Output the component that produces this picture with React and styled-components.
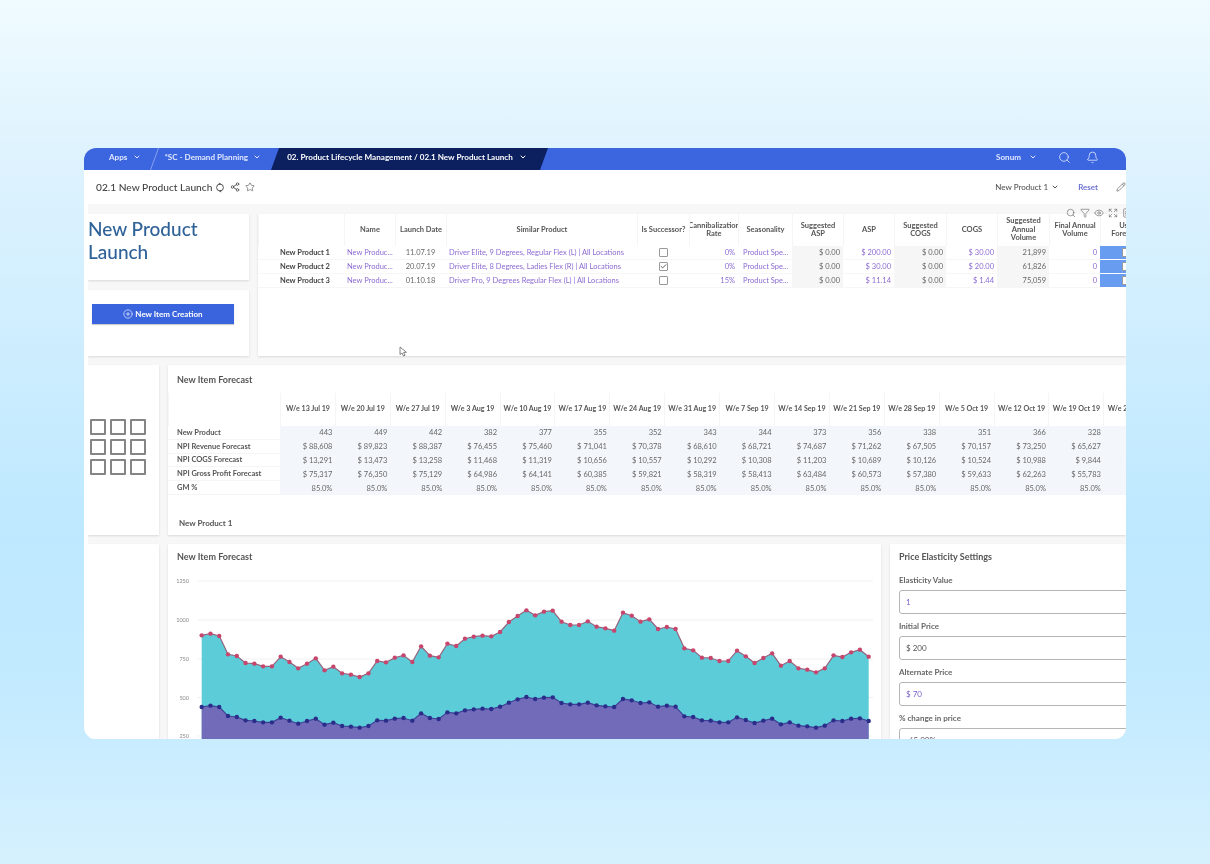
import React from 'react';
import styled, { createGlobalStyle } from 'styled-components';
import { ChevronDown, Search, Bell, Share2, Star, Pencil, Filter, Eye, Expand, FileText, CirclePlus, Check } from 'lucide-react';

const GlobalStyle = createGlobalStyle`
  html, body { margin: 0; padding: 0; }
  body {
    height: 864px;
    overflow: hidden;
    font-family: 'Lato', 'Open Sans', sans-serif;
    background: linear-gradient(180deg, #f0fbff 0%, #dff3fe 17%, #bde8ff 62%, #c3eaff 80%, #d6f1fe 100%);
  }
`;

const Page = styled.div`
  padding: 148px 84px 0;
`;

const Window = styled.div`
  width: 1042px;
  height: 591px;
  background: #fff;
  border-radius: 12px;
  overflow: hidden;
  filter: blur(0.45px);
`;

// --- top nav ---

const NavBar = styled.div`
  height: 22px;
  background: #3c66e0;
  display: flex;
  align-items: center;
  padding-left: 10px;
  color: #fff;
  font-size: 8.1px;
  font-weight: 700;
`;

const NavTab = styled.div`
  position: relative;
  height: 100%;
  box-sizing: border-box;
  display: flex;
  align-items: center;
  gap: ${p => p.$gap || 6}px;
  padding: 0 ${p => p.$right}px 4px ${p => p.$left}px;
  color: ${p => (p.$dark ? '#fff' : '#dfe7ff')};
  z-index: 0;

  &::before {
    content: '';
    position: absolute;
    inset: 0;
    z-index: -1;
    transform: skewX(-20deg);
    background: ${p => (p.$dark ? '#0c1f5e' : 'transparent')};
    border-right: ${p => (p.$line ? '1px solid #86a0ee' : 'none')};
  }
`;

const NavRight = styled.div`
  margin-left: auto;
  display: flex;
  align-items: center;
  padding: 0 27px 4px 0;
  color: #dfe7ff;
`;

const NavUser = styled.div`
  display: flex;
  align-items: center;
  gap: 8px;
  margin-right: 21px;
`;

const NavIcon = styled.span`
  display: flex;
  margin-left: ${p => p.$left || 0}px;
`;

// --- title bar ---

const TitleBar = styled.div`
  height: 34px;
  display: flex;
  align-items: center;
  padding: 0 0 0 12px;
`;

const PageName = styled.div`
  font-size: 10.2px;
  font-weight: 500;
  color: #444;
  margin-right: 3px;
`;

const TitleIcons = styled.div`
  display: flex;
  align-items: center;
  gap: 5px;
  color: #555;
`;

const TitleActions = styled.div`
  margin-left: auto;
  display: flex;
  align-items: center;
  color: #555;
`;

const PageSelect = styled.div`
  display: flex;
  align-items: center;
  gap: 3px;
  font-size: 8px;
  font-weight: 500;
  color: #555;
  margin-right: 19px;
`;

const ResetLink = styled.div`
  font-size: 8px;
  font-weight: 700;
  color: #6f74d2;
  margin-right: 18px;
`;

// --- canvas ---

const Canvas = styled.div`
  margin-left: 4px;
  height: 535px;
  background: #f7f7f7;
  padding-top: 10px;
  display: flex;
  flex-direction: column;
  gap: 9px;
  overflow: hidden;
`;

const Row = styled.div`
  display: flex;
  gap: 9px;
  height: ${p => p.$h}px;
  flex: none;
`;

const Card = styled.div`
  position: relative;
  background: #fff;
  box-shadow: 0 1px 2px rgba(0, 0, 0, 0.12);
  width: ${p => (p.$w ? `${p.$w}px` : 'auto')};
  flex: ${p => (p.$w ? 'none' : '1')};
  min-width: 0;
  overflow: ${p => (p.$clip ? 'hidden' : 'visible')};
`;

const SideStack = styled.div`
  width: 161px;
  flex: none;
  display: flex;
  flex-direction: column;
  gap: 10px;
`;

const SideCard = styled(Card)`
  flex: none;
  height: 66px;
  box-sizing: border-box;
  padding: ${p => p.$pad};
`;

const BigTitle = styled.h1`
  margin: 0;
  font-size: 19px;
  line-height: 23px;
  font-weight: 500;
  color: #2f6299;
`;

const BlueButton = styled.div`
  width: 142px;
  height: 20px;
  background: #3a64de;
  color: #fff;
  font-size: 8px;
  font-weight: 700;
  display: flex;
  align-items: center;
  justify-content: center;
  gap: 2px;
  box-shadow: 0 1px 1px rgba(0, 0, 0, 0.2);
`;

const TableIcons = styled.div`
  position: absolute;
  top: -6px;
  right: -6px;
  display: flex;
  align-items: center;
  gap: 4px;
  color: #666;
`;

const CursorMark = styled.svg`
  position: absolute;
  left: 141px;
  top: 132px;
`;

// --- settings table ---

const settingsColumns = '86px 51px 51px 191px 52px 49px 54px 51px 51px 52px 51px 52px 51px 50px';

const SettingsRow = styled.div`
  display: grid;
  grid-template-columns: ${settingsColumns};
  height: ${p => p.$h}px;
`;

const HeadCell = styled.div`
  display: flex;
  align-items: center;
  justify-content: center;
  text-align: center;
  box-sizing: border-box;
  padding: 0 ${p => p.$inset || 0}px;
  font-size: ${p => p.$size || 7.5}px;
  line-height: 8.5px;
  font-weight: 700;
  color: #555;
  border-left: 1px solid #f5f5f5;
  overflow: hidden;
  white-space: ${p => (p.$nowrap ? 'nowrap' : 'normal')};
`;

const Cell = styled.div`
  display: flex;
  align-items: center;
  justify-content: ${p => (p.$align === 'left' ? 'flex-start' : p.$align === 'center' ? 'center' : 'flex-end')};
  padding: ${p => (p.$align === 'center' ? '0' : `0 3px 0 ${p.$inset || 3}px`)};
  font-size: 7.5px;
  font-weight: ${p => (p.$bold ? 700 : 400)};
  color: ${p => (p.$link ? '#8c6bd2' : p.$bold ? '#444' : '#666')};
  background: ${p => p.$bg || 'transparent'};
  border-bottom: 1px solid #f6f6f6;
  white-space: nowrap;
  overflow: hidden;
`;

const CheckBox = styled.span`
  display: flex;
  flex: none;
  width: 9px;
  height: 9px;
  box-sizing: border-box;
  border: 1px solid #999;
  border-radius: 1px;
  background: #fff;
  align-items: center;
  justify-content: center;
  color: #444;
`;

const ForecastToggle = styled.div`
  background: #679cf0;
  border-bottom: 1px solid #fff;
  padding: 2px 0 0 22px;
  overflow: hidden;
`;

// --- forecast table ---

const GridIconCard = styled(Card)`
  display: flex;
  align-items: center;
  padding: 0 0 7px 2px;
  box-sizing: border-box;
`;

const SquareGrid = styled.div`
  display: grid;
  grid-template-columns: repeat(3, 16px);
  grid-auto-rows: 16px;
  gap: 4px;
`;

const Square = styled.div`
  border: 2px solid #858585;
  border-radius: 1px;
`;

const CardTitle = styled.div`
  height: ${p => p.$h}px;
  padding-left: 9px;
  display: flex;
  align-items: center;
  font-size: 9px;
  font-weight: 700;
  color: #555;
`;

const forecastColumns = '112px repeat(16, 54.9px)';

const ForecastHead = styled.div`
  display: grid;
  grid-template-columns: ${forecastColumns};
  height: 33px;
`;

const ForecastRow = styled.div`
  display: grid;
  grid-template-columns: ${forecastColumns};
  height: 13.8px;
`;

const RowLabel = styled.div`
  padding-left: 9px;
  display: flex;
  align-items: center;
  font-size: 7.5px;
  font-weight: 700;
  color: #555;
  border-bottom: 1px solid #f5f5f5;
  white-space: nowrap;
`;

const ValueCell = styled.div`
  display: flex;
  align-items: center;
  justify-content: flex-end;
  padding-right: 2.5px;
  font-size: 7.5px;
  color: #666;
  background: #f3f7fb;
  white-space: nowrap;
`;

const FootLabel = styled.div`
  margin-top: 23px;
  padding-left: 11px;
  font-size: 8px;
  font-weight: 700;
  color: #555;
`;

// --- bottom ---

const ChartSvg = styled.svg`
  display: block;
`;

const AxisText = styled.text`
  font-size: 5.5px;
  fill: #888;
`;

const SettingsBody = styled.div`
  padding: 2px 0 0 9px;
  display: flex;
  flex-direction: column;
`;

const FieldLabel = styled.div`
  height: 20px;
  display: flex;
  align-items: center;
  font-size: 8px;
  font-weight: 700;
  color: #666;
`;

const Field = styled.div`
  width: 300px;
  height: 24px;
  box-sizing: border-box;
  border: 1px solid #b5b5b5;
  border-radius: 3px;
  margin-bottom: 2px;
  padding-left: 6px;
  display: flex;
  align-items: center;
  font-size: 8px;
  color: ${p => (p.$link ? '#7a5fc8' : '#555')};
`;

// --- data ---

const products = [
  { name: 'New Product 1', date: '11.07.19', similar: 'Driver Elite, 9 Degrees, Regular Flex (L) | All Locations', done: false, rate: '0%', asp: '$ 200.00', cogs: '$ 30.00', vol: '21,899' },
  { name: 'New Product 2', date: '20.07.19', similar: 'Driver Elite, 8 Degrees, Ladies Flex (R) | All Locations', done: true, rate: '0%', asp: '$ 30.00', cogs: '$ 20.00', vol: '61,826' },
  { name: 'New Product 3', date: '01.10.18', similar: 'Driver Pro, 9 Degrees Regular Flex (L) | All Locations', done: false, rate: '15%', asp: '$ 11.14', cogs: '$ 1.44', vol: '75,059' },
];

const settingsHeads = [
  { text: '' },
  { text: 'Name' },
  { text: 'Launch Date', nowrap: true },
  { text: 'Similar Product' },
  { text: 'Is Successor?', nowrap: true },
  { text: 'Cannibalization Rate' },
  { text: 'Seasonality' },
  { text: 'Suggested ASP', inset: 6 },
  { text: 'ASP' },
  { text: 'Suggested COGS', inset: 6 },
  { text: 'COGS' },
  { text: 'Suggested Annual Volume', inset: 8 },
  { text: 'Final Annual Volume' },
  { text: 'Use Forecast', inset: 10 },
];

const weeks = ['13 Jul', '20 Jul', '27 Jul', '3 Aug', '10 Aug', '17 Aug', '24 Aug', '31 Aug', '7 Sep', '14 Sep', '21 Sep', '28 Sep', '5 Oct', '12 Oct', '19 Oct', '26 Oct'];

const forecast = [
  { label: 'New Product', values: ['443', '449', '442', '382', '377', '355', '352', '343', '344', '373', '356', '338', '351', '366', '328', '358'] },
  { label: 'NPI Revenue Forecast', values: ['$ 88,608', '$ 89,823', '$ 88,387', '$ 76,455', '$ 75,460', '$ 71,041', '$ 70,378', '$ 68,610', '$ 68,721', '$ 74,687', '$ 71,262', '$ 67,505', '$ 70,157', '$ 73,250', '$ 65,627', '$ 71,600'] },
  { label: 'NPI COGS Forecast', values: ['$ 13,291', '$ 13,473', '$ 13,258', '$ 11,468', '$ 11,319', '$ 10,656', '$ 10,557', '$ 10,292', '$ 10,308', '$ 11,203', '$ 10,689', '$ 10,126', '$ 10,524', '$ 10,988', '$ 9,844', '$ 10,740'] },
  { label: 'NPI Gross Profit Forecast', values: ['$ 75,317', '$ 76,350', '$ 75,129', '$ 64,986', '$ 64,141', '$ 60,385', '$ 59,821', '$ 58,319', '$ 58,413', '$ 63,484', '$ 60,573', '$ 57,380', '$ 59,633', '$ 62,263', '$ 55,783', '$ 60,860'] },
  { label: 'GM %', values: Array(16).fill('85.0%') },
];

const topLine = [286, 281, 288, 343, 348, 369, 371, 379, 379, 350, 366, 385, 371, 355, 391, 380, 400, 404, 411, 400, 363, 367, 353, 346, 366, 319, 347, 352, 311, 318, 296, 290, 287, 289, 276, 246, 228, 211, 226, 215, 212, 245, 255, 255, 244, 260, 265, 272, 218, 227, 245, 238, 267, 261, 267, 325, 331, 353, 354, 363, 363, 332, 349, 369, 354, 340, 377, 363, 385, 389, 397, 385, 346, 351, 337, 329, 350];
const lowLine = [501, 497, 501, 528, 531, 541, 543, 547, 547, 533, 542, 551, 543, 536, 554, 548, 558, 560, 563, 558, 541, 542, 536, 534, 542, 520, 534, 537, 517, 520, 511, 508, 506, 507, 500, 488, 478, 471, 477, 473, 472, 489, 493, 493, 488, 496, 499, 501, 477, 481, 489, 487, 500, 497, 500, 529, 531, 541, 542, 547, 547, 532, 540, 549, 542, 536, 553, 547, 557, 559, 563, 557, 541, 543, 536, 535, 543];

const px = i => 201.7 + i * 8.776;
const py = z => 540 + z / 3;
const pointsOf = line => line.map((z, i) => `${px(i).toFixed(1)},${py(z).toFixed(1)}`).join(' ');

const gridLines = [
  { label: '1250', y: 581 },
  { label: '1000', y: 620 },
  { label: '750', y: 659 },
  { label: '500', y: 697.5 },
  { label: '250', y: 736 },
];

const fields = [
  { label: 'Elasticity Value', value: '1', link: true },
  { label: 'Initial Price', value: '$ 200' },
  { label: 'Alternate Price', value: '$ 70', link: true },
  { label: '% change in price', value: '-65.00%' },
];

const Chevron = ({ size = 8 }) => <ChevronDown size={size} strokeWidth={3} />;

const SyncIcon = () => (
  <svg width="10" height="11" viewBox="0 0 10 11" fill="none" stroke="currentColor" strokeWidth="1">
    <circle cx="5" cy="5.5" r="3.4" />
    <path d="M3.8 0.6 L6.2 2 L3.8 2.9Z M6.2 8.1 L3.8 9 L6.2 10.4Z" fill="currentColor" stroke="none" />
  </svg>
);

const Chart = () => {
  const top = pointsOf(topLine);
  const low = pointsOf(lowLine);
  const lastX = px(topLine.length - 1).toFixed(1);
  return (
    <ChartSvg width="713" height="171" viewBox="168 568 713 171">
      {gridLines.map(g => (
        <g key={g.label}>
          <line x1="197" x2="873" y1={g.y} y2={g.y} stroke="#f1f1f1" strokeWidth="1" />
          <AxisText x="189" y={g.y + 2} textAnchor="end">{g.label}</AxisText>
        </g>
      ))}
      <polygon points={`201.7,745 ${top} ${lastX},745`} fill="#5ccdd8" />
      <polygon points={`201.7,745 ${low} ${lastX},745`} fill="#716bb9" />
      <polyline points={top} fill="none" stroke="#96647e" strokeWidth="1.2" />
      <polyline points={low} fill="none" stroke="#3f4096" strokeWidth="1.2" />
      {topLine.map((z, i) => <circle key={i} cx={px(i)} cy={py(z)} r="2.2" fill="#c6466d" />)}
      {lowLine.map((z, i) => <circle key={i} cx={px(i)} cy={py(z)} r="2.2" fill="#2b2d8a" />)}
    </ChartSvg>
  );
};

export default function App() {
  return (
    <>
      <GlobalStyle />
      <Page>
        <Window>
          <NavBar>
            <NavTab $left={15} $right={14} $line>Apps <Chevron /></NavTab>
            <NavTab $left={9} $right={14} $gap={5}>*SC - Demand Planning <Chevron /></NavTab>
            <NavTab $dark $left={12} $right={17}>02. Product Lifecycle Management / 02.1 New Product Launch <Chevron /></NavTab>
            <NavRight>
              <NavUser>Sonum <Chevron /></NavUser>
              <NavIcon><Search size={13} strokeWidth={1.5} /></NavIcon>
              <NavIcon $left={15}><Bell size={13} strokeWidth={1.5} /></NavIcon>
            </NavRight>
          </NavBar>

          <TitleBar>
            <PageName>02.1 New Product Launch</PageName>
            <TitleIcons>
              <SyncIcon />
              <Share2 size={10} strokeWidth={2.2} />
              <Star size={10} strokeWidth={1.5} />
            </TitleIcons>
            <TitleActions>
              <PageSelect>New Product 1 <Chevron /></PageSelect>
              <ResetLink>Reset</ResetLink>
              <Pencil size={10} strokeWidth={1.5} />
            </TitleActions>
          </TitleBar>

          <Canvas>
            <Row $h={142}>
              <SideStack>
                <SideCard $pad="3px 0 0 0">
                  <BigTitle>New Product<br />Launch</BigTitle>
                </SideCard>
                <SideCard $pad="14px 0 0 4px">
                  <BlueButton><CirclePlus size={10} strokeWidth={1.5} /> New Item Creation</BlueButton>
                </SideCard>
              </SideStack>
              <Card>
                <TableIcons>
                  <Search size={10} strokeWidth={1.5} />
                  <Filter size={10} strokeWidth={1.5} />
                  <Eye size={10} strokeWidth={1.5} />
                  <Expand size={10} strokeWidth={1.5} />
                  <FileText size={10} strokeWidth={1.5} />
                </TableIcons>
                <SettingsRow $h={32}>
                  {settingsHeads.map((h, i) => (
                    <HeadCell key={i} $nowrap={h.nowrap} $inset={h.inset}>{h.text}</HeadCell>
                  ))}
                </SettingsRow>
                {products.map(p => (
                  <SettingsRow $h={14} key={p.name}>
                    <Cell $bold $align="left" $inset={22}>{p.name}</Cell>
                    <Cell $link $align="left">New Produc...</Cell>
                    <Cell $align="center">{p.date}</Cell>
                    <Cell $link $align="left">{p.similar}</Cell>
                    <Cell $align="center">
                      <CheckBox>{p.done && <Check size={7} strokeWidth={3} />}</CheckBox>
                    </Cell>
                    <Cell $link>{p.rate}</Cell>
                    <Cell $link $align="left" $inset={5}>Product Spe...</Cell>
                    <Cell $bg="#f6f6f7">$ 0.00</Cell>
                    <Cell $link>{p.asp}</Cell>
                    <Cell $bg="#f6f6f7">$ 0.00</Cell>
                    <Cell $link>{p.cogs}</Cell>
                    <Cell $bg="#f6f6f7">{p.vol}</Cell>
                    <Cell $link>0</Cell>
                    <ForecastToggle><CheckBox /></ForecastToggle>
                  </SettingsRow>
                ))}
                <CursorMark width="9" height="11" viewBox="0 0 9 11" fill="#fff" stroke="#666" strokeWidth="0.8">
                  <path d="M1 1 L1 8.5 L3 7 L4.5 10 L6 9.3 L4.6 6.5 L7.4 6.3Z" />
                </CursorMark>
              </Card>
            </Row>

            <Row $h={170}>
              <GridIconCard $w={71}>
                <SquareGrid>
                  {Array.from({ length: 9 }, (_, i) => <Square key={i} />)}
                </SquareGrid>
              </GridIconCard>
              <Card $clip>
                <CardTitle $h={28}>New Item Forecast</CardTitle>
                <ForecastHead>
                  <HeadCell />
                  {weeks.map(w => <HeadCell key={w} $nowrap $size={7.1}>W/e {w} 19</HeadCell>)}
                </ForecastHead>
                {forecast.map(r => (
                  <ForecastRow key={r.label}>
                    <RowLabel>{r.label}</RowLabel>
                    {r.values.map((v, i) => <ValueCell key={i}>{v}</ValueCell>)}
                  </ForecastRow>
                ))}
                <FootLabel>New Product 1</FootLabel>
              </Card>
            </Row>

            <Row $h={220}>
              <Card $w={71} />
              <Card $w={713}>
                <CardTitle $h={24}>New Item Forecast</CardTitle>
                <Chart />
              </Card>
              <Card $clip>
                <CardTitle $h={24}>Price Elasticity Settings</CardTitle>
                <SettingsBody>
                  {fields.map(f => (
                    <React.Fragment key={f.label}>
                      <FieldLabel>{f.label}</FieldLabel>
                      <Field $link={f.link}>{f.value}</Field>
                    </React.Fragment>
                  ))}
                </SettingsBody>
              </Card>
            </Row>
          </Canvas>
        </Window>
      </Page>
    </>
  );
}
